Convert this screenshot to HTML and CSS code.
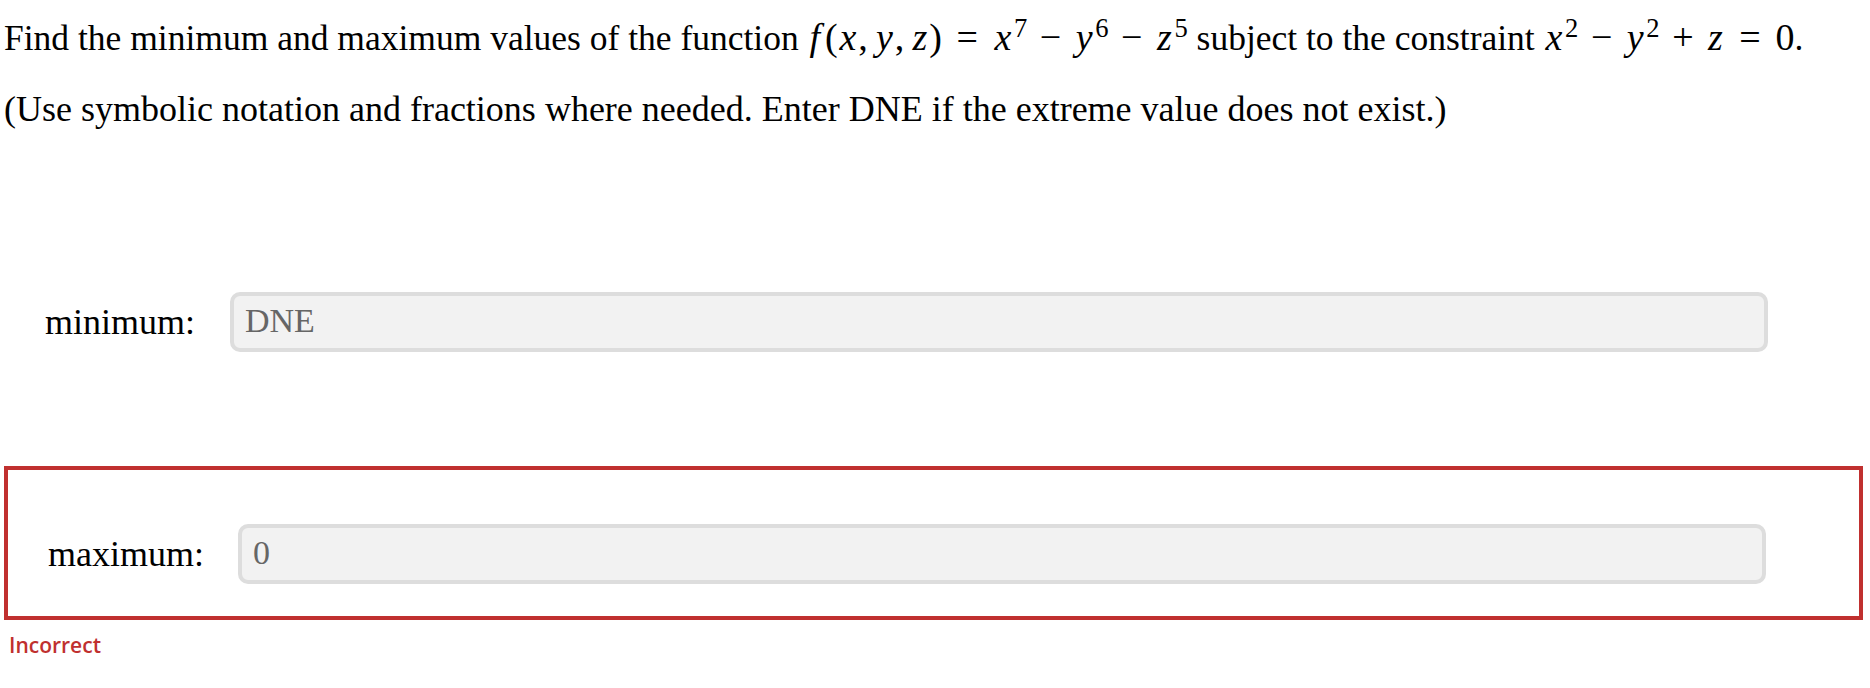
FILE: index.html
```html
<!DOCTYPE html>
<html lang="en">
<head>
<meta charset="utf-8">
<title>Extreme values</title>
<link rel="stylesheet" href="styles.css">
</head>
<body>
<div class="page">
  <p class="q q-first">Find the minimum and maximum values of the function <span class="math"><i class="fn">f</i>(<i>x</i>,<span class="thin"></span><i>y</i>,<span class="thin"></span><i>z</i>)<span class="rel">=</span><i>x</i><sup>7</sup><span class="bin">−</span><i>y</i><sup>6</sup><span class="bin">−</span><i>z</i><sup>5</sup></span> subject to the constraint <span class="math"><i>x</i><sup>2</sup><span class="bin">−</span><i>y</i><sup>2</sup><span class="bin">+</span><i>z</i><span class="rel">=</span>0</span>.</p>
  <p class="q q-second">(Use symbolic notation and fractions where needed. Enter DNE if the extreme value does not exist.)</p>

  <div class="row row-min">
    <span class="label label-min">minimum:</span>
    <div class="field">DNE</div>
  </div>

  <div class="answer-box">
    <div class="row row-max">
      <span class="label label-max">maximum:</span>
      <div class="field">0</div>
    </div>
  </div>
  <div class="feedback">Incorrect</div>
</div>
</body>
</html>
```

FILE: styles.css
```css
html, body {
  margin: 0;
  padding: 0;
  background: #ffffff;
}

.page {
  padding-left: 4px;
  font-family: "Liberation Serif", "Times New Roman", serif;
  color: #000000;
}

.q {
  margin: 0;
  font-size: 36px;
  line-height: 44px;
  white-space: nowrap;
}

.q-first {
  margin-top: 16px;
  font-size: 35.5px;
}

.q-second {
  margin-top: 27px;
}

.math {
  font-family: "Liberation Serif", "Times New Roman", serif;
  font-size: 38px;
  line-height: 0;
}

.math i {
  font-family: "Liberation Serif", "Times New Roman", serif;
  font-style: italic;
  padding: 0 0.05em;
}

.math .fn {
  margin-right: 0.08em;
}

.thin {
  display: inline-block;
  width: 0.167em;
}

.math sup {
  font-family: "Liberation Serif", "Times New Roman", serif;
  font-size: 0.7em;
  line-height: 0;
  vertical-align: 0.5em;
  margin-left: 0.03em;
}

.bin {
  margin: 0 0.33em;
}

.rel {
  margin: 0 0.385em;
}

.row {
  display: flex;
  align-items: center;
}

.label {
  flex: none;
  font-size: 36px;
  line-height: 44px;
}

.field {
  flex: 1;
  box-sizing: border-box;
  height: 60px;
  border: 4px solid #dddddd;
  border-radius: 10px;
  background: #f2f2f2;
  color: #666666;
  font-size: 34px;
  line-height: 50px;
  padding: 0 11px;
}

.row-min {
  margin-top: 161px;
  padding-left: 41px;
  padding-right: 102px;
}

.label-min {
  width: 185px;
}

.answer-box {
  margin-top: 114px;
  margin-right: 7px;
  border: 4px solid #c0302f;
  padding: 54px 0 32px 40px;
}

.row-max {
  padding-right: 93px;
}

.label-max {
  width: 190px;
}

.feedback {
  margin-top: 13px;
  padding-left: 5px;
  font-family: "Open Sans", "Noto Sans", sans-serif;
  font-weight: 600;
  font-size: 21px;
  line-height: 24px;
  color: #c0302f;
}
```
